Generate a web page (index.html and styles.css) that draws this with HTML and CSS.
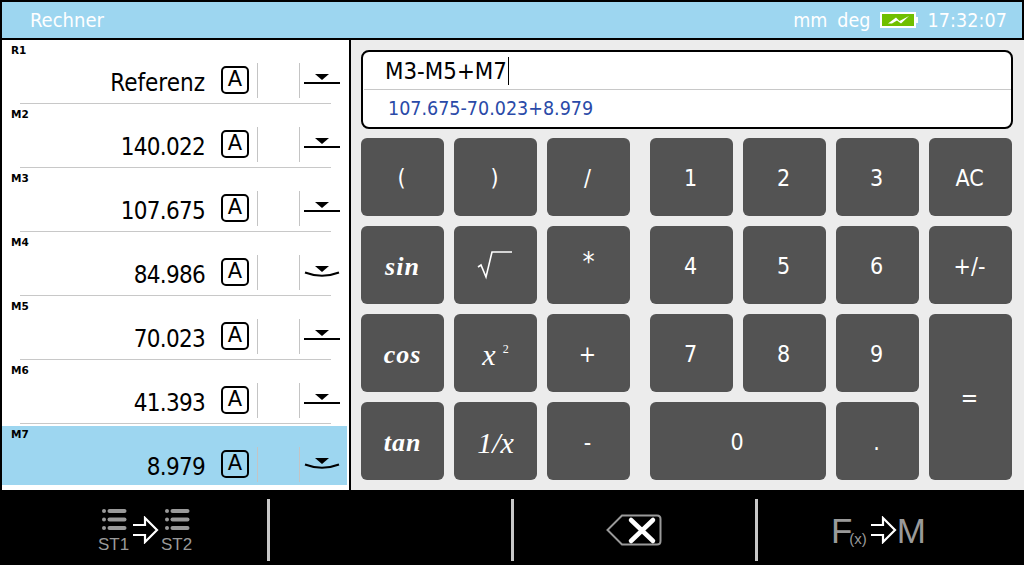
FILE: index.html
```html
<!DOCTYPE html>
<html lang="de">
<head>
<meta charset="utf-8">
<title>Rechner</title>
<link rel="stylesheet" href="styles.css">
</head>
<body>
<div class="app">
  <header class="topbar">
    <span class="title">Rechner</span>
    <div class="status">
      <span class="units">mm</span>
      <span class="units">deg</span>
      <svg class="battery" width="38" height="16" viewBox="0 0 38 16">
        <rect x="1" y="1" width="34" height="14" fill="#6fbf00" stroke="#fff" stroke-width="2"/>
        <rect x="36" y="5" width="2" height="6" fill="#fff"/>
        <path d="M8 11.500 L16 5.500 L19.500 9 L29 4 L21 11.500 L17 8.500 L12 11.500Z" fill="#fff"/>
      </svg>
      <span class="clock">17:32:07</span>
    </div>
  </header>
  <main class="main">
    <section class="list">
      <div class="row"><div class="row-inner"><span class="tag">R1</span><div class="line"><span class="val word">Referenz</span><span class="abox">A</span><i class="vsep"></i><i class="vsep second"></i><svg class="ico" width="38" height="14" viewBox="0 0 38 14"><path d="M12 2H26L19 8Z" fill="#000"/><rect x="1" y="10" width="36" height="2"/></svg></div></div></div>
      <div class="row"><div class="row-inner"><span class="tag">M2</span><div class="line"><span class="val">140.022</span><span class="abox">A</span><i class="vsep"></i><i class="vsep second"></i><svg class="ico" width="38" height="14" viewBox="0 0 38 14"><path d="M12 2H26L19 8Z" fill="#000"/><rect x="1" y="10" width="36" height="2"/></svg></div></div></div>
      <div class="row"><div class="row-inner"><span class="tag">M3</span><div class="line"><span class="val">107.675</span><span class="abox">A</span><i class="vsep"></i><i class="vsep second"></i><svg class="ico" width="38" height="14" viewBox="0 0 38 14"><path d="M12 2H26L19 8Z" fill="#000"/><rect x="1" y="10" width="36" height="2"/></svg></div></div></div>
      <div class="row"><div class="row-inner"><span class="tag">M4</span><div class="line"><span class="val">84.986</span><span class="abox">A</span><i class="vsep"></i><i class="vsep second"></i><svg class="ico" width="38" height="14" viewBox="0 0 38 14"><path d="M12 2H26L19 8Z" fill="#000"/><path d="M2 8.500Q19 15 36 8.500" fill="none" stroke="#000" stroke-width="2"/></svg></div></div></div>
      <div class="row"><div class="row-inner"><span class="tag">M5</span><div class="line"><span class="val">70.023</span><span class="abox">A</span><i class="vsep"></i><i class="vsep second"></i><svg class="ico" width="38" height="14" viewBox="0 0 38 14"><path d="M12 2H26L19 8Z" fill="#000"/><rect x="1" y="10" width="36" height="2"/></svg></div></div></div>
      <div class="row"><div class="row-inner"><span class="tag">M6</span><div class="line"><span class="val">41.393</span><span class="abox">A</span><i class="vsep"></i><i class="vsep second"></i><svg class="ico" width="38" height="14" viewBox="0 0 38 14"><path d="M12 2H26L19 8Z" fill="#000"/><rect x="1" y="10" width="36" height="2"/></svg></div></div></div>
      <div class="row last"><div class="row-inner active"><span class="tag">M7</span><div class="line"><span class="val">8.979</span><span class="abox">A</span><i class="vsep"></i><i class="vsep second"></i><svg class="ico" width="38" height="14" viewBox="0 0 38 14"><path d="M12 2H26L19 8Z" fill="#000"/><path d="M2 8.500Q19 15 36 8.500" fill="none" stroke="#000" stroke-width="2"/></svg></div></div></div>
    </section>
    <section class="calc">
      <div class="display">
        <div class="expr"><span class="expr-text">M3-M5+M7</span></div>
        <div class="resolved">107.675-70.023+8.979</div>
      </div>
      <div class="keys">
        <div class="pad pad-ops">
          <button class="key">(</button>
          <button class="key">)</button>
          <button class="key">/</button>
          <button class="key math bold">sin</button>
          <button class="key"><svg width="36" height="30" viewBox="0 0 36 30"><path d="M1 17L4 15L9 27L15 2H35" fill="none" stroke="#fff" stroke-width="1.600"/></svg></button>
          <button class="key star">*</button>
          <button class="key math bold">cos</button>
          <button class="key math big">x<sup class="sq">2</sup></button>
          <button class="key">+</button>
          <button class="key math bold">tan</button>
          <button class="key math big">1/x</button>
          <button class="key">-</button>
        </div>
        <div class="pad pad-num">
          <button class="key">1</button>
          <button class="key">2</button>
          <button class="key">3</button>
          <button class="key">AC</button>
          <button class="key">4</button>
          <button class="key">5</button>
          <button class="key">6</button>
          <button class="key">+/-</button>
          <button class="key">7</button>
          <button class="key">8</button>
          <button class="key">9</button>
          <button class="key tall">=</button>
          <button class="key wide">0</button>
          <button class="key">.</button>
        </div>
      </div>
    </section>
  </main>
  <footer class="softkeys">
    <div class="soft">
      <div class="st"><svg width="26" height="22" viewBox="0 0 26 22"><g fill="#9a9a9a"><circle cx="3" cy="3" r="2"/><circle cx="3" cy="11.500" r="2"/><circle cx="3" cy="20" r="2"/><rect x="6.500" y="1" width="19" height="4" rx="2"/><rect x="6.500" y="9.500" width="19" height="4" rx="2"/><rect x="6.500" y="18" width="19" height="4" rx="2"/></g></svg><span>ST1</span></div>
      <svg class="arrow" width="26" height="28" viewBox="0 0 26 28"><path d="M0 9H12V2L24 14L12 26V19H0" fill="none" stroke="#fff" stroke-width="2.200"/></svg>
      <div class="st"><svg width="26" height="22" viewBox="0 0 26 22"><g fill="#9a9a9a"><circle cx="3" cy="3" r="2"/><circle cx="3" cy="11.500" r="2"/><circle cx="3" cy="20" r="2"/><rect x="6.500" y="1" width="19" height="4" rx="2"/><rect x="6.500" y="9.500" width="19" height="4" rx="2"/><rect x="6.500" y="18" width="19" height="4" rx="2"/></g></svg><span>ST2</span></div>
    </div>
    <div class="soft"></div>
    <div class="soft">
      <svg class="bksp" width="56" height="32" viewBox="0 0 56 32"><path d="M16 1.500H51Q54.500 1.500 54.500 5V27Q54.500 30.500 51 30.500H16L1.500 16Z" fill="none" stroke="#9a9a9a" stroke-width="2"/><path d="M25 6L47 27M47 6L25 27" stroke="#fff" stroke-width="4.500" stroke-linecap="round"/></svg>
    </div>
    <div class="soft">
      <span class="fx fx-f">F</span><span class="fx-sub">(x)</span>
      <svg class="arrow-m" width="26" height="28" viewBox="0 0 26 28"><path d="M0 9H12V2L24 14L12 26V19H0" fill="none" stroke="#fff" stroke-width="2.200"/></svg>
      <span class="fx">M</span>
    </div>
  </footer>
</div>
</body>
</html>
```

FILE: styles.css
```css
* { box-sizing: border-box; }
html, body { margin: 0; padding: 0; }
body { width: 1024px; height: 565px; overflow: hidden; background: #000; font-family: "DejaVu Sans Condensed", "DejaVu Sans", sans-serif; }
.app { display: flex; flex-direction: column; height: 565px; }

.topbar { flex: 0 0 36px; margin: 2px; background: #9dd6f0; color: #fff; display: flex; align-items: center; justify-content: space-between; padding: 0 15px 0 28px; font-size: 19.500px; }
.title { font-size: 20px; }
.status { display: flex; align-items: center; }
.units { margin-right: 10px; }
.battery { margin: 0 9px 0 0; }
.clock { letter-spacing: 0.100px; }

.main { flex: 0 0 450px; display: flex; }
.list { margin-left: 2px; width: 347px; height: 450px; background: #fff; display: flex; flex-direction: column; }
.row { flex: 0 0 64px; height: 64px; position: relative; }
.row::after { content: ""; position: absolute; left: 18px; right: 18px; bottom: 0; height: 1px; background: #c8c8c8; }
.row.last { height: 66px; flex-basis: 66px; }
.row.last::after { display: none; }
.row-inner { height: 63px; }
.row-inner.active { background: #9dd6f0; margin-top: 2px; height: 59px; width: 345px; }
.row-inner.active .tag { padding-top: 3px; height: 16px; }
.tag { display: block; height: 18px; padding: 5px 0 0 9px; font: bold 10.500px/11px "DejaVu Sans", sans-serif; }
.line { display: flex; align-items: center; height: 36px; margin-top: 4px; }
.val { width: 203px; text-align: right; font-size: 24px; letter-spacing: -0.700px; line-height: 36px; padding-top: 6px; }
.val.word { letter-spacing: 0; }
.abox { width: 28px; height: 28px; margin: -1px 0 0 16px; border: 2px solid #000; border-radius: 5px; display: flex; align-items: center; justify-content: center; font: 21px/1 "DejaVu Sans", sans-serif; }
.vsep { width: 1px; height: 35px; background: #c4c4c4; margin-left: 8px; }
.vsep.second { margin-left: 41px; }
.ico { margin: -2px 0 0 3px; }

.calc { flex: 1; border-left: 2px solid #000; background: #ececec; padding: 10px 11px 0 10px; display: flex; flex-direction: column; }
.display { height: 79px; background: #fff; border: 2px solid #000; border-radius: 8px; display: flex; flex-direction: column; }
.expr { height: 38px; border-bottom: 1px solid #c8c8c8; padding-left: 21px; display: flex; align-items: center; font-size: 23.800px; margin-left: 1px; }
.expr-text { border-right: 1px solid #000; line-height: 28px; padding-right: 1px; }
.resolved { flex: 1; padding-left: 25px; color: #2a4aa8; font-size: 19.500px; display: flex; align-items: center; }
.keys { display: flex; gap: 20px; margin-top: 9px; }
.pad { display: grid; grid-auto-rows: 78px; gap: 10px; }
.pad-ops { grid-template-columns: repeat(3, 83px); }
.pad-num { grid-template-columns: repeat(4, 83px); }
.key { border: 0; padding: 2px 2px 0 0; margin: 0; background: #535353; color: #fff; border-radius: 6px; font-family: "DejaVu Sans Condensed", "DejaVu Sans", sans-serif; font-size: 23px; display: flex; align-items: center; justify-content: center; }
.key svg { display: block; margin-top: -2px; }
.key.wide { grid-column: span 2; }
.key.tall { grid-row: span 2; }
.key.math { font-family: "Liberation Serif", serif; font-style: italic; font-size: 26px; padding: 4px 0 0; }
.key.big { font-size: 30px; }
.key.bold { font-weight: bold; letter-spacing: 1px; }
.key.star { padding: 0 0 8px; font-size: 27px; }
.sq { font-size: 12px; font-style: normal; align-self: flex-start; margin: 25px 0 0 7px; line-height: 1; }

.softkeys { flex: 0 0 75px; padding: 9px 24px 4px 23px; display: flex; }
.soft { flex: 0 0 244px; height: 62px; display: flex; align-items: center; justify-content: center; color: #9a9a9a; font-family: "Liberation Sans", sans-serif; border-left: 3px solid #c8c8c8; }
.soft:first-child { border-left: 0; }
.st { display: flex; flex-direction: column; align-items: center; font-size: 17px; line-height: 17px; width: 31px; }
.st svg { display: block; margin-bottom: 5px; }
.st span { padding-top: 1px; }
.arrow { margin: 0 2px 0 4px; }
.bksp { margin-right: 2px; }
.fx { font-size: 35px; line-height: 1; }
.fx-f { letter-spacing: -4px; }
.fx-sub { font-size: 15px; align-self: flex-end; margin: 0 0 14px 1px; }
.arrow-m { margin: 0 0 0 4px; }
```
